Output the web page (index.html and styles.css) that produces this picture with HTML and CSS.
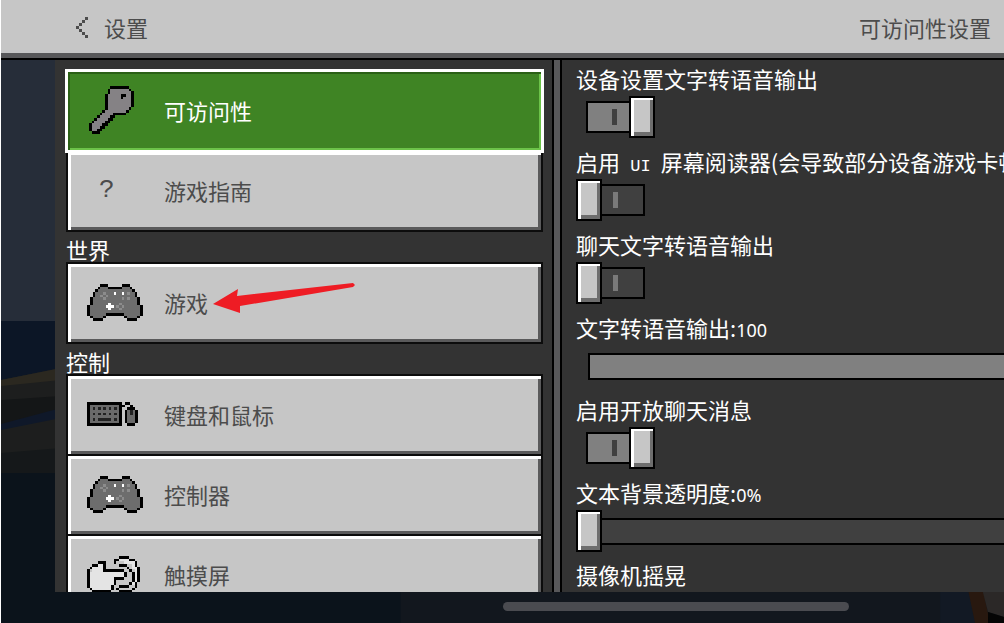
FILE: index.html
```
<!DOCTYPE html>
<html lang="zh-CN">

<head>
    <meta charset="UTF-8">
    <meta name="viewport" content="width=device-width, initial-scale=1.0">
    <title>可访问性设置</title>
    <link rel="stylesheet" href="styles.css">
</head>

<body>
    <!-- world behind the menu -->
    <svg class="scene" viewBox="0 0 1004 623" preserveAspectRatio="none" aria-hidden="true">
        <rect width="1004" height="321" fill="#262d39" />
        <rect y="321" width="1004" height="302" fill="#0c1626" />
        <path d="M0 380L60 368V520H0z" fill="#1d1e1e" />
        <path d="M0 380L60 368V380L0 386z" fill="#2b2820" />
        <path d="M0 400L60 396V415L0 429z" fill="#141617" />
        <path d="M0 424L60 408V418L0 430z" fill="#0f1829" />
        <path d="M0 453L60 448V473H0z" fill="#15181a" />
        <rect y="473" width="1004" height="150" fill="#0b131b" />
        <rect x="400" y="585" width="604" height="38" fill="#12171e" />
        <path d="M940 585H975L990 623H940z" fill="#121924" />
        <path d="M967 585H982L990 623H975z" fill="#28180f" />
        <path d="M981 585H1004V617L988 612z" fill="#2b2827" />
        <path d="M988 612L1004 617V623H988z" fill="#050505" />
    </svg>

    <header class="header">
        <button class="back">
            <svg width="12" height="21" viewBox="0 0 4 7" shape-rendering="crispEdges" aria-hidden="true">
                <path d="M3 0h1v1h-1zM2 1h1v1h-1zM1 2h1v1h-1zM0 3h1v1h-1zM1 4h1v1h-1zM2 5h1v1h-1zM3 6h1v1h-1z" />
            </svg>
            设置
        </button>
        <h1>可访问性设置</h1>
    </header>

    <!-- icons used more than once -->
    <svg class="defs" aria-hidden="true">
        <symbol id="gamepad" viewBox="0 0 21 14">
            <path d="M5 0h3v1h5V0h3v1h1v1h1v1h1v2h1v3h1v4h-1v1h-1v1h-4v-1h-1v-1H7v1H6v1H2v-1H1v-1H0V8h1V5h1V3h1V2h1V1h1z" />
            <path fill="#6d6d6d" d="M5 1h3v1h5v-1h3v1h1v1h1v2h1v3h1v4h-1v1h-4v-1h-1v-1H7v1H6v1H2v-1H1V8h1V5h1V3h1V2h1z" />
            <path fill="#8c8c8c" d="M6 3h1v1h-1zM5 4h1v1h-1zM7 4h1v1h-1zM6 5h1v1h-1zM12 7h1v1h-1zM11 8h1v1h-1zM13 8h1v1h-1zM12 9h1v1h-1zM15 3h1v1h-1zM13 5h1v1h-1zM15 5h1v1h-1z" />
            <path fill="#fff" d="M10 3h1v1h-1zM13 3h1v1h-1zM8 7h1v1h1v1h-1v1h-1v-1h-1v-1h1z" />
        </symbol>
    </svg>

    <main class="main">
        <nav class="nav">
            <button class="item selected">
                <span class="icon">
                    <svg class="key" width="45" height="48" viewBox="0 0 17 18" shape-rendering="crispEdges">
                        <path d="M8 0h7v1h1v1h1v6h-1v1h-1v1h-1v1h-4v1H9v1H8v1H7v1H6v1H5v1H4v1H1v-1H0v-3h1v-1h1v-1h1v-1h1v-1h1v-1h1V3h1V1h1z" />
                        <path fill="#858285" d="M8 1h7v1h1v6h-1v1h-1v1H9v1H8v1H7v1H6v1H5v1H4v1H3v1H1v-3h1v-1h1v-1h1v-1h1v-1h1v-1h1v-6h1z" />
                        <path d="M12 3h2v1h-1v1h-1z" />
                    </svg>
                </span>
                可访问性
            </button>
            <button class="item">
                <span class="icon question">?</span>
                游戏指南
            </button>

            <h2>世界</h2>
            <button class="item">
                <span class="icon">
                    <svg width="56" height="37" shape-rendering="crispEdges"><use href="#gamepad" /></svg>
                </span>
                游戏
            </button>

            <h2>控制</h2>
            <button class="item">
                <span class="icon">
                    <svg width="51" height="24" viewBox="0 0 19 9" shape-rendering="crispEdges">
                        <path d="M0 0h13v9h-13zM13 1h1v1h-1zM14 0h2v1h-2zM16 1h1v1h-1zM15 2h3v1h1v5h-1v1h-3v-1h-1v-5h1z" />
                        <path fill="#6a6a6a" d="M1 1h11v7h-11zM15 3h3v5h-3z" />
                        <path fill="#222" d="M2 2h1v1h-1zM4 2h1v1h-1zM6 2h1v1h-1zM8 2h1v1h-1zM10 2h1v1h-1zM2 4h1v1h-1zM4 4h1v1h-1zM6 4h1v1h-1zM8 4h1v1h-1zM10 4h1v1h-1zM2 6h1v1h-1zM4 6h5v1h-5zM10 6h1v1h-1zM16 3h1v2h-1z" />
                    </svg>
                </span>
                键盘和鼠标
            </button>
            <button class="item">
                <span class="icon">
                    <svg width="56" height="37" shape-rendering="crispEdges"><use href="#gamepad" /></svg>
                </span>
                控制器
            </button>
            <button class="item">
                <span class="icon">
                    <svg width="53" height="37" viewBox="0 0 20 14" shape-rendering="crispEdges">
                        <path fill="#e4e4e4" d="M4 3h2v3h8v2h-4v3h-1v2H2v-1H1V6h1V4h2z" />
                        <path fill="#e4e4e4" d="M12 1h4v1h2v2h1v7h-2v-1h1V5h-1V3h-3v-1h-2z" />
                        <path stroke="#000" d="M12 .5h4M10 1.5h2M16 1.5h2M4 2.5h3M10 2.5h1M18 2.5h1M2 3.5h2M6 3.5h1M12 3.5h3M18 3.5h1M1 4.5h1M6 4.5h1M15 4.5h1M19 4.5h1M0 5.5h1M6 5.5h8M16 5.5h1M19 5.5h1M0 6.5h1M14 6.5h1M17 6.5h1M19 6.5h1M0 7.5h1M14 7.5h1M17 7.5h1M19 7.5h1M0 8.5h1M10 8.5h4M17 8.5h1M19 8.5h1M0 9.5h1M10 9.5h1M17 9.5h1M19 9.5h1M0 10.5h1M10 10.5h1M16 10.5h1M18 10.5h1M0 11.5h1M9 11.5h1M12 11.5h4M18 11.5h1M1 12.5h1M9 12.5h1M11 12.5h1M17 12.5h1M2 13.5h7M12 13.5h5" />
                    </svg>
                </span>
                触摸屏
            </button>
        </nav>

        <div class="divider"></div>

        <section class="options">
            <div class="option">
                <label for="deviceTts">设备设置文字转语音输出</label>
                <input class="toggle" type="checkbox" id="deviceTts" checked>
            </div>
            <div class="option">
                <label for="screenReader">启用<span class="mono"> UI </span>屏幕阅读器(会导致部分设备游戏卡顿</label>
                <input class="toggle" type="checkbox" id="screenReader">
            </div>
            <div class="option">
                <label for="chatTts">聊天文字转语音输出</label>
                <input class="toggle" type="checkbox" id="chatTts">
            </div>
            <div class="option range">
                <label for="ttsVolume">文字转语音输出:<span class="number">100</span></label>
                <input class="slider full" type="range" id="ttsVolume" min="0" max="100" value="100">
            </div>
            <div class="option">
                <label for="openChat">启用开放聊天消息</label>
                <input class="toggle" type="checkbox" id="openChat" checked>
            </div>
            <div class="option range">
                <label for="textOpacity">文本背景透明度:<span class="number">0%</span></label>
                <input class="slider" type="range" id="textOpacity" min="0" max="100" value="0">
            </div>
            <div class="option">
                <label for="cameraShake">摄像机摇晃</label>
                <input class="toggle" type="checkbox" id="cameraShake" checked>
            </div>
        </section>
    </main>

    <footer class="footer">
        <div class="home-bar"></div>
    </footer>

    <!-- arrow pointing at the game entry -->
    <svg class="arrow" width="142" height="32" viewBox="0 0 142 32" aria-hidden="true">
        <path d="M0 17L25 2L24 9L140 -4L142 -2L140 0L27 19L27 26z" />
    </svg>
</body>

</html>
```
FILE: styles.css
```
*,
*::before,
*::after {
    box-sizing: border-box;
}

body {
    margin: 0;
    height: 100vh;
    display: flex;
    flex-direction: column;
    position: relative;
    overflow: hidden;
    border-left: 1px solid #fff;
    background-color: #0b131b;
    font-family: "Noto Sans CJK SC", sans-serif;
    font-size: 22px;
    color: #fff;
}

button {
    font: inherit;
    border: none;
    cursor: pointer;
}

h1,
h2 {
    margin: 0;
    font-size: 22px;
    font-weight: normal;
}

.scene {
    position: absolute;
    top: 0;
    left: 0;
    width: 100%;
    height: 100%;
    z-index: -1;
}

.defs {
    position: absolute;
    width: 0;
    height: 0;
}

.header {
    display: flex;
    align-items: center;
    justify-content: space-between;
    height: 60px;
    padding: 0 13px 4px 75px;
    background-color: #c6c6c6;
    border-bottom: 2px solid #000;
    box-shadow: inset 0 -5px #58585a;
    color: #4c4c4c;
}

.header h1,
.back {
    line-height: 30px;
}

.back {
    display: flex;
    align-items: center;
    gap: 16px;
    padding: 0;
    background: none;
    color: #4c4c4c;
}

.back svg {
    fill: #4c4c4c;
}

.main {
    flex: 1;
    min-height: 0;
    display: grid;
    grid-template-columns: 497fr 10px 442fr;
    grid-template-rows: 100%;
    padding-left: 54px;
}

.nav {
    overflow: hidden;
    padding: 12px 9px 0 11px;
    background-color: #333;
}

.nav h2 {
    height: 32px;
    line-height: 34px;
}

.item {
    display: flex;
    align-items: center;
    width: calc(100% - 4px);
    height: 78px;
    margin: 0 2px 2px;
    padding: 0 19px 2px;
    background-color: #c6c6c6;
    box-shadow: inset 3px 3px #fff, inset -3px -3px #5a5a5b, 0 0 0 2px #0c0c0c;
    color: #4c4c4c;
    text-align: left;
}

.item.selected {
    position: relative;
    background-color: #3f8424;
    box-shadow: inset 2px 2px #2b6016, inset -2px -2px #6cc349, 0 0 0 3px #fff;
    color: #fff;
}

.icon {
    display: flex;
    width: 77px;
}

.key {
    margin-left: 2px;
}

.question {
    padding-left: 12px;
    font-family: "Liberation Mono", monospace;
    font-size: 26px;
}

.divider {
    background-color: #58585a;
    border-left: 2px solid #000;
    border-right: 2px solid #000;
}

.options {
    overflow: hidden;
    padding: 3px 0 0 14px;
    background-color: #333;
}

.option {
    height: 83px;
}

.option.range {
    height: 82px;
}

.option label {
    display: block;
    height: 33px;
    line-height: 31px;
    white-space: nowrap;
}

.mono {
    font-family: "Liberation Mono", monospace;
    font-size: 17px;
    white-space: pre;
}

.number {
    font-family: "Noto Sans", sans-serif;
    font-size: 18px;
}

/* toggle switch */
.toggle {
    appearance: none;
    display: block;
    position: relative;
    width: 69px;
    height: 42px;
    margin: 0;
}

.toggle:checked {
    margin-left: 10px;
}

.toggle::before {
    content: "";
    position: absolute;
    top: 5px;
    right: 0;
    width: 59px;
    height: 32px;
    border: 2px solid #000;
    background: linear-gradient(#7a7a7a, #7a7a7a) 25px 6px / 5px 16px no-repeat #404040;
}

.toggle:checked::before {
    right: auto;
    left: 0;
    background: linear-gradient(#404040, #404040) 24px 6px / 5px 16px no-repeat #808080;
}

.toggle::after {
    content: "";
    position: absolute;
    top: 0;
    left: 0;
    width: 26px;
    height: 42px;
    border: 2px solid #000;
    background-color: #c6c6c6;
    box-shadow: inset 3px 2px #fff, inset -3px -4px #6e6e6e;
}

.toggle:checked::after {
    left: auto;
    right: 0;
}

/* slider, runs on past the right edge of the panel */
.slider {
    appearance: none;
    display: block;
    width: calc(100% + 60px);
    height: 42px;
    margin: 0;
    background: none;
}

.slider::-webkit-slider-runnable-track {
    height: 27px;
    border: 2px solid #000;
    background-color: #404040;
}

.slider::-webkit-slider-thumb {
    appearance: none;
    width: 26px;
    height: 42px;
    margin: -10px 0 0 -2px;
    border: 2px solid #000;
    background-color: #c6c6c6;
    box-shadow: inset 3px 2px #fff, inset -3px -4px #6e6e6e;
}

.slider.full {
    margin-left: 12px;
}

.slider.full::-webkit-slider-runnable-track {
    background-color: #808080;
}

.footer {
    height: 31px;
    padding-top: 10px;
}

.home-bar {
    width: 346px;
    height: 9px;
    margin-left: 50%;
    border-radius: 5px;
    background-color: #4a4b50;
}

.arrow {
    position: absolute;
    top: 287px;
    left: 212px;
    overflow: visible;
    fill: #ee1c24;
    pointer-events: none;
}
```
